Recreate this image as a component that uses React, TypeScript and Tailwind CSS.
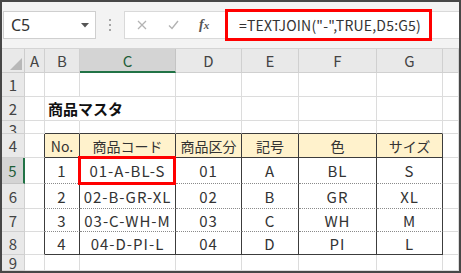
const cols = ["A", "B", "C", "D", "E", "F", "G", ""];

const rows: string[][] = [
  ["", "", "", "", "", "", "", ""],
  ["", "商品マスタ", "", "", "", "", "", ""],
  ["", "", "", "", "", "", "", ""],
  ["", "No.", "商品コード", "商品区分", "記号", "色", "サイズ", ""],
  ["", "1", "01-A-BL-S", "01", "A", "BL", "S", ""],
  ["", "2", "02-B-GR-XL", "02", "B", "GR", "XL", ""],
  ["", "3", "03-C-WH-M", "03", "C", "WH", "M", ""],
  ["", "4", "04-D-PI-L", "04", "D", "PI", "L", ""],
  ["", "", "", "", "", "", "", ""],
];

function cellClass(r: number, c: number) {
  // r: 1..9 sheet row, c: 1..8 sheet column (A=1)
  const inTable = r >= 4 && r <= 8;
  const tableCol = c >= 2 && c <= 7;
  let cls = "relative border-r border-b flex items-center justify-center whitespace-nowrap ";
  if (inTable && c >= 1 && c <= 7) cls += "border-r-[#3c3c3c] ";
  else cls += "border-r-[#dcdcdc] ";
  if (tableCol && (r === 3 || r === 4 || r === 8)) cls += "border-b-[#3c3c3c] ";
  else if (tableCol && r >= 5 && r <= 7) cls += "border-b-[#8a8a8a] [border-bottom-style:dotted] ";
  else cls += "border-b-[#dcdcdc] ";
  if (r === 4 && tableCol) cls += "bg-[#fff2cc] ";
  else cls += "bg-white ";
  if (r === 3) cls += "items-start overflow-hidden ";
  return cls;
}

export default function App() {
  return (
    <div className="w-[461px] h-[273px] border-2 border-[#474747] bg-white flex flex-col overflow-hidden font-['Noto_Sans_CJK_JP','Noto_Sans',sans-serif] text-[#2b2b2b]">
      {/* formula bar */}
      <div className="h-[47px] shrink-0 bg-[#f3f3f3] border-b border-[#d4d4d4] flex items-start pt-[9px] pl-[1px]">
        <div className="w-[93px] h-[28px] bg-white border border-[#cfcfcf] flex items-center pl-[7px] pr-[6px]">
          <span className="text-[16px] text-[#333] leading-none flex-1 font-['Noto_Sans',sans-serif]">C5</span>
          <svg width="8" height="5" viewBox="0 0 8 5">
            <path d="M0 0 L8 0 L4 4.5 Z" fill="#555" />
          </svg>
        </div>
        <div className="w-[28px] h-[28px] flex flex-col items-center justify-center gap-[3px]">
          <span className="w-[2px] h-[2px] bg-[#a6a6a6]" />
          <span className="w-[2px] h-[2px] bg-[#a6a6a6]" />
          <span className="w-[2px] h-[2px] bg-[#a6a6a6]" />
        </div>
        <div className="flex-1 h-[28px] bg-white border border-[#d9d9d9] border-r-0 flex items-center">
          <div className="w-[100px] flex items-center">
            <svg className="ml-[12px]" width="10" height="10" viewBox="0 0 10 10">
              <path d="M1 1 L9 9 M9 1 L1 9" stroke="#b3b3b3" strokeWidth="1.3" />
            </svg>
            <svg className="ml-[21px]" width="11" height="10" viewBox="0 0 11 10">
              <path d="M1 5.5 L4 8.5 L10 1" stroke="#b3b3b3" strokeWidth="1.4" fill="none" />
            </svg>
            <span className="ml-[20px] text-[14px] italic font-bold text-[#555] font-['Liberation_Serif',serif] leading-none">
              f<span className="text-[11px]">x</span>
            </span>
          </div>
          <div className="w-[207px] h-[32px] border-[3px] border-[#ff0000] flex items-center pl-[11px] shrink-0">
            <span className="text-[14px] tracking-[0.2px] text-[#333] leading-none">=TEXTJOIN("-",TRUE,D5:G5)</span>
          </div>
        </div>
      </div>

      {/* sheet */}
      <div className="flex-1 grid grid-cols-[23px_20px_35px_96px_66px_57px_78px_66px_1fr] grid-rows-[24px_24px_24px_13px_24px_26px_25px_23px_23px_1fr] text-[15px] leading-none">
        {/* column header row */}
        <div className="relative bg-[#e9e9e9] border-r border-b border-[#cdcdcd]">
          <svg className="absolute right-[2px] bottom-[2px]" width="12" height="12" viewBox="0 0 12 12">
            <path d="M12 0 L12 12 L0 12 Z" fill="#b8b8b8" />
          </svg>
        </div>
        {cols.map((c, i) =>
          c === "C" ? (
            <div
              key={i}
              className="bg-[#d4d4d4] border-r border-r-[#c4c4c4] border-b-2 border-b-[#217346] flex items-center justify-center text-[#1e5e38]"
            >
              {c}
            </div>
          ) : (
            <div
              key={i}
              className="bg-[#e9e9e9] border-r border-b border-[#d0d0d0] flex items-center justify-center text-[#444]"
            >
              {c}
            </div>
          )
        )}

        {rows.map((row, ri) => {
          const r = ri + 1;
          return [
            r === 5 ? (
              <div
                key={`h${r}`}
                className="bg-[#d4d4d4] border-r-2 border-r-[#217346] border-b border-b-[#c4c4c4] flex items-center justify-center text-[#1e5e38]"
              >
                {r}
              </div>
            ) : (
              <div
                key={`h${r}`}
                className={
                  "bg-[#e9e9e9] border-r border-b border-[#d0d0d0] flex justify-center text-[#444] overflow-hidden " +
                  (r === 3 ? "items-start pt-[1px]" : "items-center")
                }
              >
                {r}
              </div>
            ),
            ...row.map((v, ci) => {
              const c = ci + 1;
              if (r === 2 && c === 2) {
                return (
                  <div key={`${r}-${c}`} className="relative z-10 border-r border-b border-r-white border-b-[#dcdcdc] bg-white flex items-center">
                    <span className="absolute left-[3px] text-[15px] font-bold text-[#111] whitespace-nowrap">{v}</span>
                  </div>
                );
              }
              if (r === 2 && c === 3) {
                return <div key={`${r}-${c}`} className="border-r border-b border-r-[#dcdcdc] border-b-[#dcdcdc] bg-white" />;
              }
              return (
                <div key={`${r}-${c}`} className={cellClass(r, c) + (r === 5 && c === 3 ? "z-10" : "")}>
                  <span className={r === 4 ? "text-[14px] text-[#333]" : "tracking-[1px] text-[#333]"}>{v}</span>
                  {r === 5 && c === 3 && (
                    <div className="absolute -left-[2px] -top-[2px] -right-[1px] -bottom-[2px] border-[3px] border-[#ff0000]" />
                  )}
                </div>
              );
            }),
          ];
        })}
      </div>
    </div>
  );
}
